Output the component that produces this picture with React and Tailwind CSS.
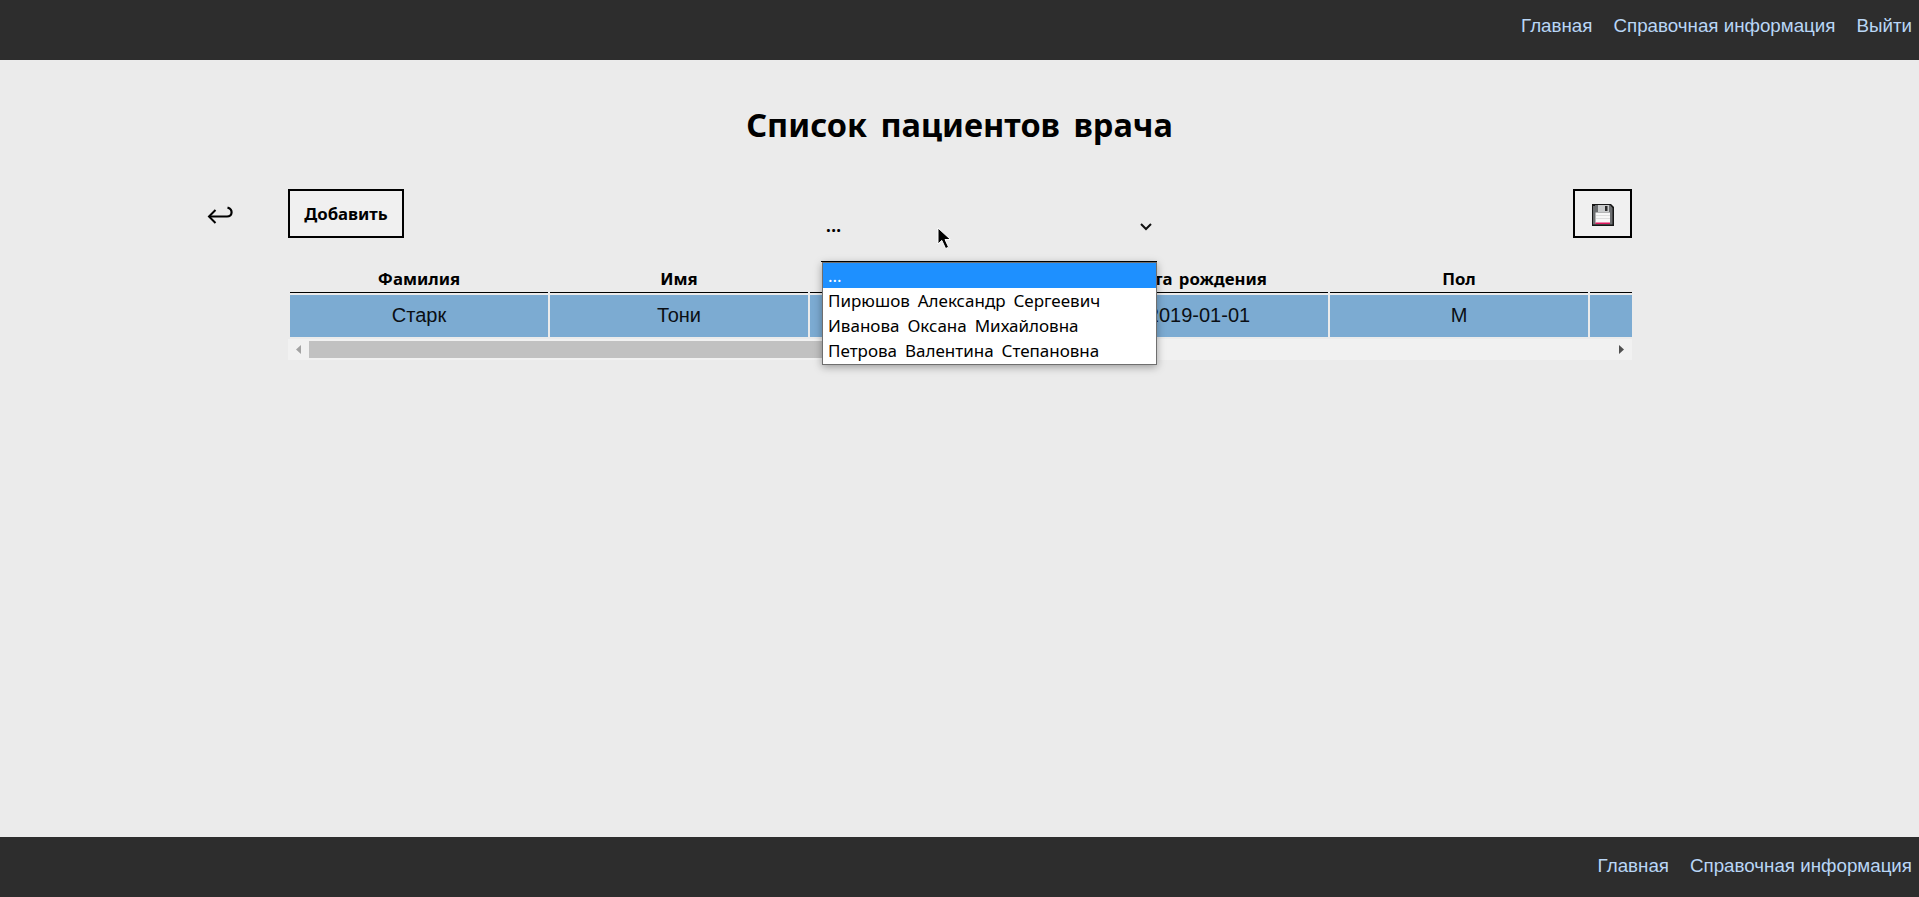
import React from "react";

const HUMANIST = "font-['Noto_Sans','Open_Sans',sans-serif]";

const columns = [
  { title: "Фамилия", value: "Старк", width: "w-[258px]" },
  { title: "Имя", value: "Тони", width: "w-[258px]" },
  { title: "", value: "", width: "w-[258px]" },
  { title: "Дата рождения", value: "2019-01-01", width: "w-[258px]" },
  { title: "Пол", value: "М", width: "w-[258px]" },
  { title: "", value: "", width: "w-[42px]" },
];

const doctors = [
  "Пирюшов Александр Сергеевич",
  "Иванова Оксана Михайловна",
  "Петрова Валентина Степановна",
];

function Nav({ items }) {
  return (
    <nav className="flex justify-end gap-[21px] pr-[7px] text-[18.75px] leading-[22px] text-[#b9d6f6]">
      {items.map((item) => (
        <a key={item} className="whitespace-nowrap">{item}</a>
      ))}
    </nav>
  );
}

function FloppyIcon() {
  return (
    <svg className="mt-[2px]" width="22" height="22" viewBox="0 0 22 22">
      <path d="M0 0H19L22 3V22H0Z" fill="#161616" />
      <path d="M1 2H3V1H18L20.5 4V20.5H1Z" fill="#6c6e70" />
      <rect x="6" y="1" width="11" height="7" fill="#c9cbcc" />
      <rect x="13" y="2" width="2.5" height="5" fill="#2a2a2a" />
      <rect x="3.5" y="8.5" width="14.5" height="11" fill="#f7f7f7" />
      <path d="M4 11.5H18M4 14.5H18" stroke="#dedede" />
      <rect x="3.5" y="18.5" width="14.5" height="1.5" fill="#e0175f" />
    </svg>
  );
}

function Dropdown() {
  return (
    <div className="relative h-[73px] w-[336px] border-b border-black">
      <div className="flex h-full items-start justify-between pr-[5px] pl-[5px]">
        <span className={`${HUMANIST} mt-[25px] text-[17px] leading-[24px] font-bold tracking-[0.4px]`}>...</span>
        <svg className="mt-[34px]" width="12" height="8" viewBox="0 0 12 8" fill="none">
          <path d="M1 1L6 6L11 1" stroke="#111" strokeWidth="2" />
        </svg>
      </div>
      <ul
        className={`${HUMANIST} absolute top-[73px] left-[1px] z-10 w-[335px] border border-[#6f6f6f] bg-white pb-px text-[17px] leading-[25px] [word-spacing:3.5px] text-black shadow-[0_2px_8px_rgba(0,0,0,0.35)]`}
      >
        <li className="h-[25px] bg-[#1e90ff] pl-[5px] text-white">...</li>
        {doctors.map((name) => (
          <li key={name} className="h-[25px] pl-[5px] whitespace-nowrap">{name}</li>
        ))}
      </ul>
      <svg className="absolute top-[38px] left-[116px] z-20" width="16" height="23" viewBox="0 0 16 23">
        <path
          d="M1 1V17L4.8 13.4L8.6 21.6L11.6 20.2L8 12.5H13.5Z"
          fill="#000"
          stroke="#fff"
          strokeWidth="1"
        />
      </svg>
    </div>
  );
}

function PatientsTable() {
  return (
    <div className="w-[1344px]">
      <div className="flex gap-[2px] pl-[2px]">
        {columns.map((col, i) => (
          <div key={i} className={`${col.width} shrink-0 text-center`}>
            <div className={`${HUMANIST} h-[29px] border-b border-black text-[16.75px] leading-[30px] font-bold [word-spacing:2px]`}>
              {col.title}
            </div>
            <div className="mt-[2px] h-[42px] bg-[#7cabd2] text-[20px] leading-[41px] text-[#0b0f14]">
              {col.value}
            </div>
          </div>
        ))}
      </div>
      <div className="mt-[2px] flex h-[21px] items-center justify-between bg-[#f1f1f1] pr-[8px] pl-[8px]">
        <div className="flex items-center gap-[8px]">
          <svg width="5" height="9" viewBox="0 0 5 9"><path d="M5 0V9L0 4.5Z" fill="#a3a3a3" /></svg>
          <div className="h-[17px] w-[620px] bg-[#c1c1c1]" />
        </div>
        <svg width="5" height="9" viewBox="0 0 5 9"><path d="M0 0V9L5 4.5Z" fill="#505050" /></svg>
      </div>
    </div>
  );
}

export default function App() {
  return (
    <div className="flex h-[897px] w-[1919px] flex-col overflow-hidden bg-[#ebebeb] font-['Liberation_Sans',Arial,sans-serif] text-black">
      <header className="h-[60px] shrink-0 bg-[#2d2d2d] pt-[15px]">
        <Nav items={["Главная", "Справочная информация", "Выйти"]} />
      </header>
      <main className="flex grow flex-col">
        <h1 className={`${HUMANIST} mt-[42px] mb-px h-[46px] text-center text-[32.5px] leading-[46px] font-bold [word-spacing:5px]`}>
          Список пациентов врача
        </h1>
        <div className="mt-[40px] flex h-[75px] items-start pl-[207px]">
          <div className="mt-[17px] w-[81px]">
            <svg width="28" height="19" viewBox="0 0 28 19" fill="none" stroke="#000">
              <path d="M2 10.500H20C25.500 10.500 26.500 3.500 20.500 1.500" strokeWidth="2.2" />
              <path d="M8.500 4L2 10.500L8.500 17" strokeWidth="2" />
            </svg>
          </div>
          <button className={`${HUMANIST} h-[49px] w-[116px] shrink-0 border-2 border-black bg-[#f0f0f0] pt-px text-[16.75px] font-bold`}>
            Добавить
          </button>
          <div className="ml-[417px]">
            <Dropdown />
          </div>
          <button className="ml-[416px] flex h-[49px] w-[59px] shrink-0 items-center justify-center border-2 border-black bg-[#f0f0f0]">
            <FloppyIcon />
          </button>
        </div>
        <div className="pl-[288px]">
          <PatientsTable />
        </div>
      </main>
      <footer className="h-[60px] shrink-0 bg-[#2d2d2d] pt-[18px]">
        <Nav items={["Главная", "Справочная информация"]} />
      </footer>
    </div>
  );
}
